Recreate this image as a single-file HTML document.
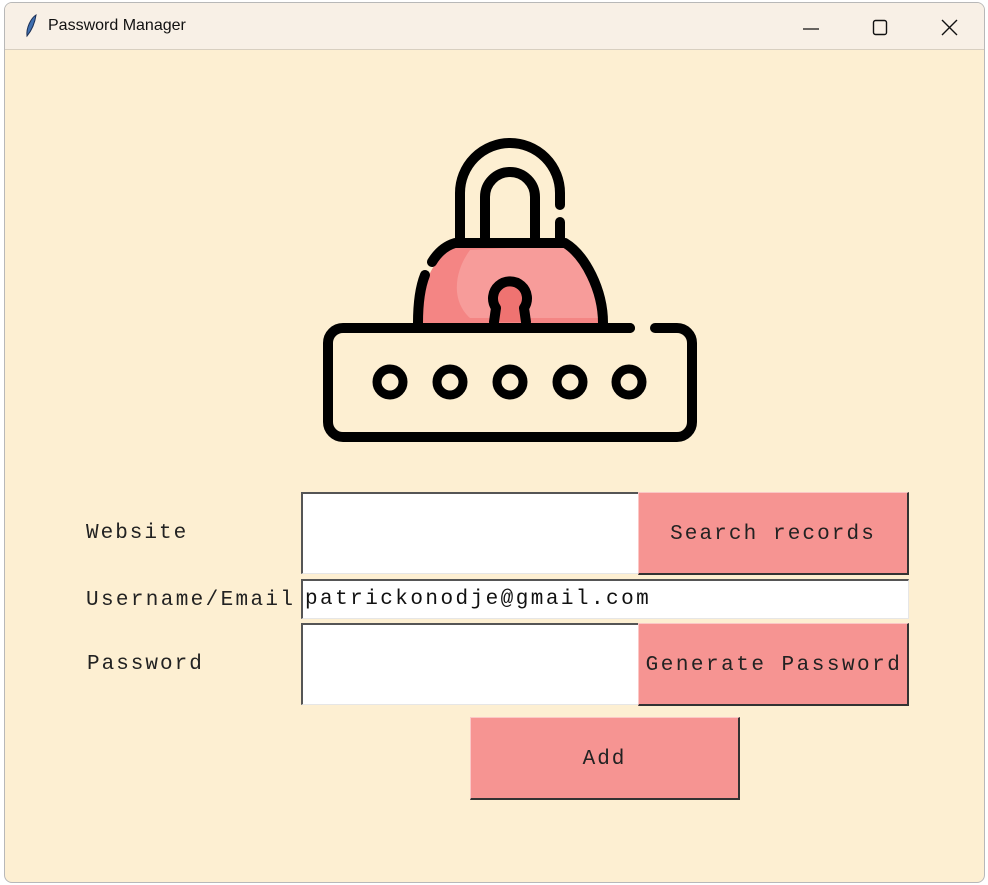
<!DOCTYPE html>
<html><head><style>
*{margin:0;padding:0;box-sizing:border-box}
body{width:988px;height:885px;background:#fff;position:relative;overflow:hidden;font-family:"Liberation Mono",monospace}
.win{position:absolute;left:4px;top:2px;width:981px;height:881px;border:1px solid #b8b8b8;border-radius:8px;background:#fdefd2;overflow:hidden}
.tb{position:absolute;left:0;top:0;width:100%;height:47px;background:#f8f0e6;border-bottom:1px solid #d8cfc0}
.tt{position:absolute;left:43px;top:14px;font-family:"Liberation Sans",sans-serif;font-size:16px;color:#111}
.a{position:absolute}
.lbl{position:absolute;font-size:21px;color:#222;letter-spacing:2px;line-height:24px}
.ent{position:absolute;background:#fff;border-top:2px solid #555;border-left:2px solid #555;border-right:1px solid #e6e6e6;border-bottom:1px solid #e6e6e6}
.btn{position:absolute;background:#f69492;border-right:2px solid #333;border-bottom:2px solid #333;border-top:1px solid #fbc8c6;border-left:1px solid #fbc8c6;display:flex;align-items:center;justify-content:center;font-size:21px;letter-spacing:2px;color:#222;padding-top:2px}
</style></head><body>
<div class="win">
<div class="tb">
<svg class="a" style="left:18px;top:10px" width="16" height="26" viewBox="0 0 16 26"><path d="M4 23 C3 15 8 5 13 2 C12 9 9 17 4 23Z" fill="#3f6fb0" stroke="#1b2f55" stroke-width="1"/></svg>
<div class="tt">Password Manager</div>
<svg class="a" style="left:796px;top:16px" width="20" height="20"><line x1="2" y1="10" x2="18" y2="10" stroke="#111" stroke-width="1.2"/></svg>
<svg class="a" style="left:866px;top:15px" width="20" height="20"><rect x="2.5" y="2.5" width="13" height="14" rx="2" fill="none" stroke="#111" stroke-width="1.4"/></svg>
<svg class="a" style="left:935px;top:15px" width="20" height="20"><path d="M2 2L17 17M17 2L2 17" stroke="#111" stroke-width="1.4"/></svg>
</div>
</div>
<svg class="a" style="left:0;top:0" width="988" height="885" viewBox="0 0 988 885">
<g fill="none" stroke="#000" stroke-width="10" stroke-linecap="round" stroke-linejoin="round">
<path d="M418 323 C418 285 440 250 455 243 L565 243 C585 255 603 290 603 323Z" fill="#f48584" stroke="none"/>
<path d="M470 250 C455 270 450 300 470 318 L603 318 C603 290 590 262 570 245Z" fill="#f79c9a" stroke="none"/>
<path d="M418 323 C418 300 421 285 425 275"/>
<path d="M432 262 C438 252 445 246 455 243 L565 243 C585 255 603 290 603 323"/>
<path d="M460 243 L460 193 A50 50 0 0 1 560 193 L560 205"/>
<path d="M560 222 L560 240"/>
<path d="M485 243 L485 197 A25 25 0 0 1 535 197 L535 243"/>
<path d="M494 322 L496 308 A17 17 0 1 1 524 308 L526 322" fill="#ef7371"/>
<path d="M630 328 L343 328 A15 15 0 0 0 328 343 L328 422 A15 15 0 0 0 343 437 L677 437 A15 15 0 0 0 692 422 L692 343 A15 15 0 0 0 677 328 L655 328" fill="#fdefd2"/>
<path d="M400 328 L630 328"/>
</g>
<g fill="none" stroke="#000" stroke-width="9">
<circle cx="390" cy="382" r="13"/><circle cx="450" cy="382" r="13"/><circle cx="510" cy="382" r="13"/><circle cx="570" cy="382" r="13"/><circle cx="629" cy="382" r="13"/>
</g>
</svg>
<div class="lbl" style="left:86px;top:522px">Website</div>
<div class="lbl" style="left:86px;top:589px;letter-spacing:2.35px">Username/Email</div>
<div class="lbl" style="left:87px;top:653px">Password</div>
<div class="ent" style="left:301px;top:492px;width:338px;height:82px"></div>
<div class="btn" style="left:638px;top:492px;width:271px;height:83px;letter-spacing:2.1px">Search records</div>
<div class="ent" style="left:301px;top:579px;width:608px;height:40px"><span style="position:absolute;left:2px;top:7px;font-size:21px;letter-spacing:2.45px;color:#111;line-height:24px">patrickonodje@gmail.com</span></div>
<div class="ent" style="left:301px;top:623px;width:338px;height:82px"></div>
<div class="btn" style="left:638px;top:623px;width:271px;height:83px;letter-spacing:2.5px;padding-left:2px">Generate Password</div>
<div class="btn" style="left:470px;top:717px;width:270px;height:83px">Add</div>
</body></html>
